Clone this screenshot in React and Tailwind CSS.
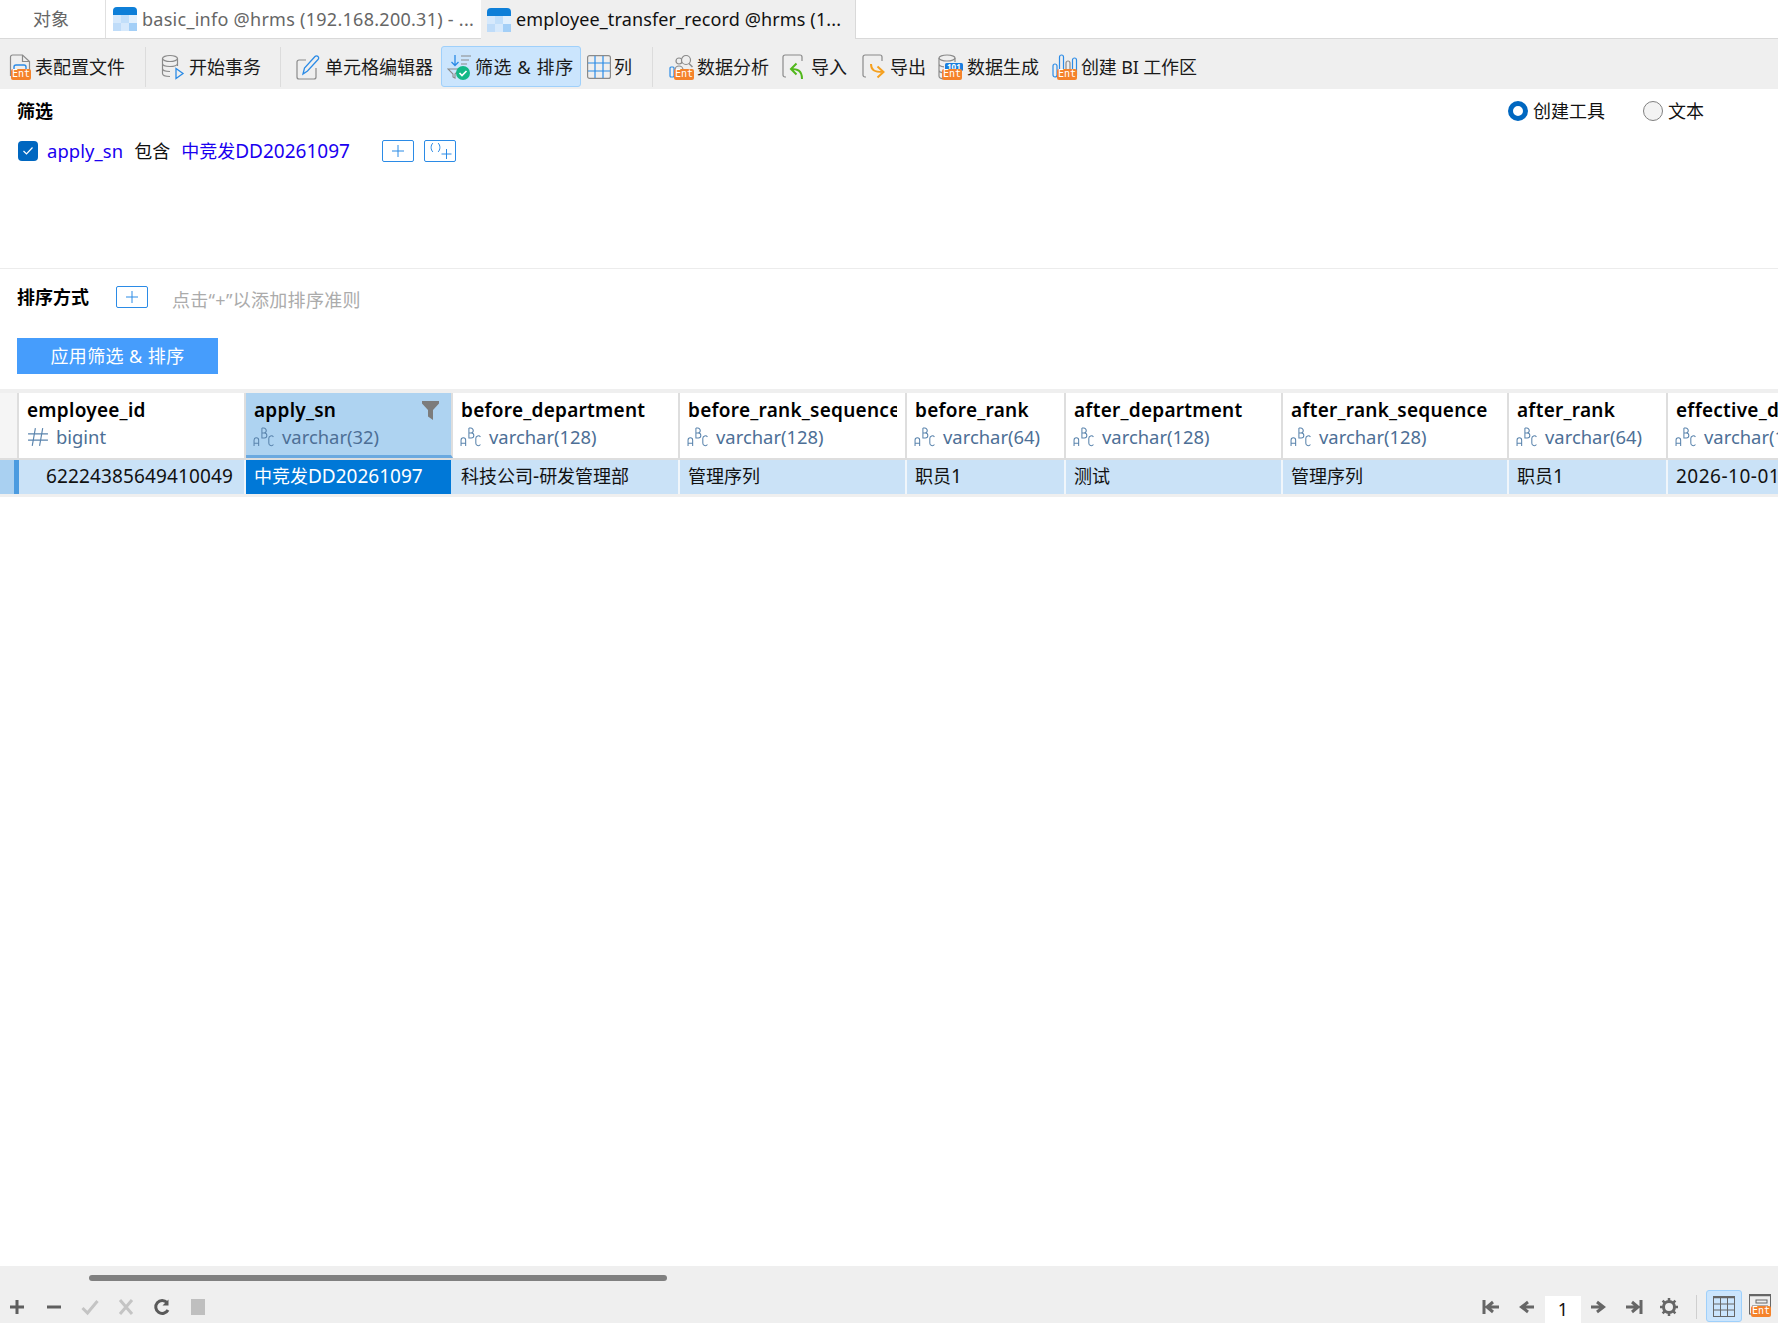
import React from 'react';

const font = { fontFamily: '"Noto Sans", "Noto Sans CJK SC", sans-serif' };

function Ent({ className }) {
  return (
    <span className={"absolute flex items-center justify-center rounded-[2px] bg-[#f5822a] text-white text-[10px] leading-none h-[11px] w-[20px] " + (className || "")} style={{ fontFamily: '"DejaVu Sans Mono", monospace' }}>
      Ent
    </span>
  );
}

function TableTabIcon() {
  return (
    <svg width="24" height="24" viewBox="0 0 24 24" className="shrink-0">
      <rect x="0" y="0" width="24" height="24" rx="4" fill="#d6e9fc" />
      <path d="M0 8V4a4 4 0 0 1 4-4h16a4 4 0 0 1 4 4v4z" fill="#0e7fd8" />
      <rect x="8" y="8" width="8" height="8" fill="#c2dffa" />
      <rect x="16" y="8" width="8" height="8" fill="#e2f0fd" />
      <rect x="0" y="16" width="8" height="8" fill="#bfdcf9" />
      <rect x="16" y="16" width="8" height="8" fill="#a3cff7" />
    </svg>
  );
}

function ProfileIcon() {
  return (
    <span className="relative block h-[26px] w-[24px]">
      <svg width="22" height="26" viewBox="0 0 22 26" fill="none">
        <path d="M1.5 22V3a2 2 0 0 1 2-2h10l7 6.5V22" stroke="#8a8a8a" strokeWidth="1.2" />
        <path d="M13.5 1v6.5h7" stroke="#8a8a8a" strokeWidth="1.2" />
        <rect x="5" y="11" width="12" height="9" rx="2" stroke="#2b8be6" strokeWidth="1.4" />
      </svg>
      <Ent className="left-[2px] top-[15px]" />
    </span>
  );
}

function TxIcon() {
  return (
    <svg width="24" height="26" viewBox="0 0 24 26" fill="none">
      <ellipse cx="9" cy="4.5" rx="7.5" ry="3" stroke="#8a8a8a" strokeWidth="1.2" />
      <path d="M1.5 4.5v15c0 1.700 3.400 3 7.500 3M16.500 4.500V12M1.500 9.500c0 1.700 3.400 3 7.500 3s7.500-1.300 7.500-3M1.500 14.500c0 1.700 3.400 3 7.500 3" stroke="#8a8a8a" strokeWidth="1.2" />
      <path d="M15 14.500v10l7-5z" stroke="#2b8be6" strokeWidth="1.3" />
    </svg>
  );
}

function EditIcon() {
  return (
    <svg width="24" height="26" viewBox="0 0 24 26" fill="none">
      <path d="M10 6H3a2 2 0 0 0-2 2v15a2 2 0 0 0 2 2h15a2 2 0 0 0 2-2V14" stroke="#8a8a8a" strokeWidth="1.2" />
      <path d="M7 20l1.500-6L19 2.500a2 2 0 0 1 3 0 2 2 0 0 1 0 3L11.500 17z" stroke="#2b8be6" strokeWidth="1.3" />
    </svg>
  );
}

function FilterSortIcon() {
  return (
    <svg width="26" height="26" viewBox="0 0 26 26" fill="none">
      <path d="M8 1v10M4.500 8l3.500 3.500L11.500 8" stroke="#2b8be6" strokeWidth="1.3" />
      <path d="M14 2h10M14 6h8M14 10h6" stroke="#8a8a8a" strokeWidth="1.1" />
      <path d="M1 15h12l-5 5v4l-2-1v-3z" stroke="#8a8a8a" strokeWidth="1.1" />
      <circle cx="16" cy="19" r="7" fill="#12b886" />
      <path d="M12.500 19l2.500 2.500 4.500-4.500" stroke="#fff" strokeWidth="1.700" />
    </svg>
  );
}

function ColumnsIcon() {
  return (
    <svg width="24" height="24" viewBox="0 0 24 24" fill="none">
      <rect x="0.600" y="0.600" width="22.800" height="22.800" rx="2" stroke="#8a8a8a" strokeWidth="1.200" />
      <path d="M8 1v22M16 1v22" stroke="#2b8be6" strokeWidth="1.200" />
      <path d="M1 8h22M1 16h22" stroke="#2b8be6" strokeWidth="1.200" />
    </svg>
  );
}

function AnalysisIcon() {
  return (
    <span className="relative block h-[26px] w-[26px]">
      <svg width="26" height="26" viewBox="0 0 26 26" fill="none">
        <rect x="1" y="13" width="4" height="10" rx="1" stroke="#2b8be6" strokeWidth="1.200" />
        <circle cx="10" cy="7" r="3" stroke="#8a8a8a" strokeWidth="1.200" />
        <path d="M6 22v-6a4 4 0 0 1 8 0v6" stroke="#8a8a8a" strokeWidth="1.200" />
        <circle cx="17" cy="6" r="4.500" fill="#efefef" stroke="#8a8a8a" strokeWidth="1.200" />
        <path d="M20 9.500l3.500 3.500" stroke="#8a8a8a" strokeWidth="1.500" />
      </svg>
      <Ent className="left-[5px] top-[15px]" />
    </span>
  );
}

function ImportIcon() {
  return (
    <svg width="24" height="26" viewBox="0 0 24 26" fill="none">
      <path d="M4 23H3a2 2 0 0 1-2-2V3a2 2 0 0 1 2-2h15a2 2 0 0 1 2 2v4" stroke="#8a8a8a" strokeWidth="1.200" />
      <path d="M14.500 9.500L9 15l5.500 5.500M9 15c6 0 11 1 11 10" stroke="#52b81c" strokeWidth="2" />
    </svg>
  );
}

function ExportIcon() {
  return (
    <svg width="24" height="26" viewBox="0 0 24 26" fill="none">
      <path d="M4 23H3a2 2 0 0 1-2-2V3a2 2 0 0 1 2-2h15a2 2 0 0 1 2 2v4" stroke="#8a8a8a" strokeWidth="1.200" />
      <path d="M9 10c0 6 3 8 12 8M15.500 12.500l6 5.500-6 5.500" stroke="#f5a01f" strokeWidth="2" />
    </svg>
  );
}

function GenerateIcon() {
  return (
    <span className="relative block h-[26px] w-[26px]">
      <svg width="26" height="26" viewBox="0 0 26 26" fill="none">
        <ellipse cx="9" cy="4" rx="8" ry="3" stroke="#8a8a8a" strokeWidth="1.200" />
        <path d="M1 4v18c0 1.500 2 2.500 4 2.800M17 4v4M1 10c0 1.500 2 2.500 5 2.800M1 16c0 1.500 2 2.500 4 2.800" stroke="#8a8a8a" strokeWidth="1.200" />
        <rect x="7" y="9" width="18" height="8" rx="1.500" fill="#1a7fe0" />
      </svg>
      <span className="absolute left-[9px] top-[8px] text-[8px] leading-[9px] text-white font-bold">101</span>
      <Ent className="left-[4px] top-[15px]" />
    </span>
  );
}

function BiIcon() {
  return (
    <span className="relative block h-[26px] w-[26px]">
      <svg width="26" height="26" viewBox="0 0 26 26" fill="none">
        <rect x="1" y="10" width="4" height="13" rx="2" stroke="#2b8be6" strokeWidth="1.200" />
        <rect x="7.500" y="1" width="4" height="22" rx="2" stroke="#2b8be6" strokeWidth="1.200" />
        <rect x="14" y="7" width="4" height="16" rx="2" stroke="#8a8a8a" strokeWidth="1.200" />
        <rect x="20.500" y="4" width="4" height="19" rx="2" stroke="#2b8be6" strokeWidth="1.200" />
      </svg>
      <Ent className="left-[5px] top-[15px]" />
    </span>
  );
}

function ToolItem({ icon, label, active, gap, className, labelClass }) {
  return (
    <div className={"flex items-center h-[41px] border " + (active ? "bg-[#cbe5fd] border-[#9fd0fb] rounded-[3px] " : "border-transparent ") + (className || "")}>
      {icon}
      <span className={"text-[18px] leading-none text-[#1a1a1a] whitespace-nowrap " + (labelClass || "")} style={{ marginLeft: gap }}>{label}</span>
    </div>
  );
}

function Sep({ className }) {
  return <div className={"w-px h-[40px] bg-[#dcdcdc] " + (className || "")} />;
}

function AbcIcon() {
  return (
    <svg width="22" height="20" viewBox="0 0 21 19" fill="none" stroke="#5a84ad" strokeWidth="1" className="shrink-0 -ml-[1px]">
      <path d="M1 18l0-5.500a2.200 2.200 0 0 1 4.400 0V18M1 15.500h4.400" />
      <path d="M8.500 1v9.500h2.300a2.300 2.300 0 0 0 0-4.800H8.500M8.500 5.700h1.800a2.300 2.300 0 0 0 0-4.700H8.500" />
      <path d="M19.500 9.500a2.400 2.400 0 0 0-4.400 1.300v4.600a2.400 2.400 0 0 0 4.400 1.300" />
    </svg>
  );
}

function HashIcon() {
  return (
    <svg width="22" height="20" viewBox="0 0 21 19" fill="none" stroke="#5a84ad" strokeWidth="1.100" className="shrink-0">
      <path d="M8 1L5 18M15 1l-3 17M1 6.500h19M1 12.500h19" />
    </svg>
  );
}

const columns = [
  { name: 'employee_id', type: 'bigint', w: 'w-[227px]', value: '62224385649410049', hash: true, right: true, track: 'tracking-[0.13px]' },
  { name: 'apply_sn', type: 'varchar(32)', w: 'w-[207px]', value: '中竞发DD20261097', selected: true },
  { name: 'before_department', type: 'varchar(128)', w: 'w-[227px]', value: '科技公司-研发管理部' },
  { name: 'before_rank_sequence', type: 'varchar(128)', w: 'w-[227px]', value: '管理序列' },
  { name: 'before_rank', type: 'varchar(64)', w: 'w-[159px]', value: '职员1' },
  { name: 'after_department', type: 'varchar(128)', w: 'w-[217px]', value: '测试' },
  { name: 'after_rank_sequence', type: 'varchar(128)', w: 'w-[226px]', value: '管理序列' },
  { name: 'after_rank', type: 'varchar(64)', w: 'w-[159px]', value: '职员1' },
  { name: 'effective_date', type: 'varchar(128)', w: 'w-[227px]', value: '2026-10-01', track: 'tracking-[0.5px]' },
];

// digits and latin run a touch wider than the cjk in the reference
function Mixed({ text }) {
  const parts = text.split(/([\u4e00-\u9fff]+)/).filter(Boolean);
  return parts.map((p, i) => (
    <span key={i} className={/[\u4e00-\u9fff]/.test(p) ? "text-[18px]" : "text-[19px]"}>{p}</span>
  ));
}

function HeaderCell({ col }) {
  return (
    <div className={col.w + " shrink-0 h-[65px] relative border-r-[2px] border-[#dedede] pl-[8px] pr-[8px] overflow-hidden " + (col.selected ? "bg-[#aed3f1] border-b-[3px] border-b-[#6aa9e0]" : "bg-white")}>
      <div className="text-[19px] tracking-[0.25px] leading-[24px] mt-[5px] font-semibold text-black whitespace-nowrap overflow-hidden">{col.name}</div>
      <div className="flex items-center h-[24px] mt-[3px] text-[18.4px] text-[#4d6f96] whitespace-nowrap">
        {col.hash ? <HashIcon /> : <AbcIcon />}
        <span className="ml-[7px]">{col.type}</span>
      </div>
      {col.selected && (
        <svg width="17" height="19" viewBox="0 0 17 19" className="absolute right-[12px] top-[8px]">
          <path d="M0 0h17v2.500L11 9v10l-5-3.500V9L0 2.500z" fill="#7c7c7c" />
        </svg>
      )}
    </div>
  );
}

function DataCell({ col }) {
  return (
    <div className={col.w + " shrink-0 h-[34px] flex items-center border-r-[2px] px-[8px] pb-[2px] whitespace-nowrap overflow-hidden " + (col.selected ? "bg-[#0078d7] text-white border-[#cae2f7]" : "bg-[#cae2f7] text-[#111] border-[#f0f6fb]") + (col.right ? " justify-end pr-[11px]" : "") + (col.track ? " " + col.track : "")}>
      <Mixed text={col.value} />
    </div>
  );
}

function BarIcon({ children, className }) {
  return (
    <svg width="18" height="18" viewBox="0 0 18 18" fill="none" className={"shrink-0 " + (className || "")}>
      {children}
    </svg>
  );
}

export default function App() {
  return (
    <div className="w-[1778px] h-[1323px] flex flex-col overflow-hidden bg-white" style={font}>
      {/* tabs */}
      <div className="h-[39px] shrink-0 flex border-b border-[#d9d9d9] text-[18px]">
        <div className="w-[105px] flex items-center justify-center text-[#666] pr-[3px]">对象</div>
        <div className="w-[376px] flex items-center pl-[7px] gap-[5px] border-l border-[#e0e0e0] text-[#666] whitespace-nowrap">
          <TableTabIcon />
          <span className="tracking-[0.27px]">basic_info @hrms (192.168.200.31) - ...</span>
        </div>
        <div className="w-[375px] flex items-center pl-[6px] gap-[5px] bg-[#efefef] border-r border-[#d9d9d9] text-[#111] whitespace-nowrap h-[39px]">
          <TableTabIcon />
          <span className="tracking-[0.13px]">employee_transfer_record @hrms (1...</span>
        </div>
      </div>

      {/* toolbar */}
      <div className="h-[50px] shrink-0 bg-[#efefef] flex items-center pt-[5px]">
        <ToolItem icon={<ProfileIcon />} label="表配置文件" gap="2px" className="ml-[8px]" />
        <Sep className="ml-[19px]" />
        <ToolItem icon={<TxIcon />} label="开始事务" gap="4px" className="ml-[14px]" />
        <Sep className="ml-[18px]" />
        <ToolItem icon={<EditIcon />} label="单元格编辑器" gap="5px" className="ml-[14px]" />
        <ToolItem icon={<FilterSortIcon />} label="筛选 & 排序" gap="2px" active labelClass="tracking-[0.6px]" className="ml-[7px] w-[140px] pl-[5px]" />
        <ToolItem icon={<ColumnsIcon />} label="列" gap="3px" className="ml-[5px]" />
        <Sep className="ml-[19px]" />
        <ToolItem icon={<AnalysisIcon />} label="数据分析" gap="2px" className="ml-[15px]" />
        <ToolItem icon={<ImportIcon />} label="导入" gap="5px" className="ml-[11px]" />
        <ToolItem icon={<ExportIcon />} label="导出" gap="4px" className="ml-[13px]" />
        <ToolItem icon={<GenerateIcon />} label="数据生成" gap="3px" className="ml-[10px]" />
        <ToolItem icon={<BiIcon />} label="创建 BI 工作区" gap="3px" labelClass="tracking-[-0.15px]" className="ml-[11px]" />
      </div>

      {/* filter */}
      <div className="h-[180px] shrink-0 border-b border-[#ececec] relative pl-[17px]">
        <div className="flex justify-between items-center h-[44px]">
          <span className="text-[18px] font-bold text-black">筛选</span>
          <div className="flex items-center text-[18px] text-[#111] mr-[74px]">
            <span className="w-[20px] h-[20px] rounded-full border-[5px] border-[#0067c0] bg-white" />
            <span className="ml-[5px]">创建工具</span>
            <span className="ml-[38px] w-[20px] h-[20px] rounded-full border border-[#808080] bg-[#f3f3f3]" />
            <span className="ml-[5px]">文本</span>
          </div>
        </div>
        <div className="flex items-center h-[26px] mt-[5px] text-[18px]">
          <span className="ml-[1px] w-[20px] h-[20px] rounded-[4px] bg-[#0067c0] flex items-center justify-center">
            <svg width="12" height="10" viewBox="0 0 12 10" fill="none"><path d="M1.500 5l3 3 6-6.500" stroke="#fff" strokeWidth="1.200" /></svg>
          </span>
          <span className="ml-[9px] text-[#1a00f0] tracking-[0.1px] text-[18.4px]">apply_sn</span>
          <span className="ml-[11px] text-[#111]">包含</span>
          <span className="ml-[11px] text-[#1a00f0]"><Mixed text="中竞发DD20261097" /></span>
          <button className="ml-[32px] w-[32px] h-[22px] border border-[#2b8be6] rounded-[2px] flex items-center justify-center">
            <svg width="12" height="12" viewBox="0 0 12 12" fill="none"><path d="M6 0v12M0 6h12" stroke="#2b8be6" strokeWidth="1" /></svg>
          </button>
          <button className="ml-[10px] w-[32px] h-[22px] border border-[#2b8be6] rounded-[2px] flex items-center justify-center">
            <svg width="26" height="18" viewBox="0 0 26 18" fill="none">
              <path d="M6 1c-2.500 2-2.500 7 0 9M11 1c2.500 2 2.500 7 0 9" stroke="#2b8be6" strokeWidth="1" />
              <path d="M19.500 7v10M14.500 12h10" stroke="#2b8be6" strokeWidth="1" />
            </svg>
          </button>
        </div>
      </div>

      {/* sort */}
      <div className="h-[120px] shrink-0 pl-[17px]">
        <div className="flex items-center h-[26px] mt-[15px]">
          <span className="text-[18px] font-bold text-black">排序方式</span>
          <button className="ml-[27px] w-[32px] h-[22px] border border-[#2b8be6] rounded-[2px] flex items-center justify-center">
            <svg width="12" height="12" viewBox="0 0 12 12" fill="none"><path d="M6 0v12M0 6h12" stroke="#2b8be6" strokeWidth="1" /></svg>
          </button>
          <span className="ml-[24px] mt-[6px] text-[18px] text-[#ababab] tracking-[0.3px]">点击“+”以添加排序准则</span>
        </div>
        <button className="mt-[28px] w-[201px] h-[36px] bg-[#469dfc] text-white text-[18px] tracking-[0.4px] flex items-center justify-center">应用筛选 & 排序</button>
      </div>

      {/* grid */}
      <div className="flex-1 min-h-0 flex flex-col overflow-hidden">
        <div className="h-[4px] shrink-0 bg-[#efefef]" />
        <div className="flex shrink-0 border-b-[2px] border-[#dedede]">
          <div className="w-[19px] shrink-0 h-[65px] bg-[#f5f5f5] border-r-[2px] border-[#dedede]" />
          {columns.map((c) => <HeaderCell key={c.name} col={c} />)}
        </div>
        <div className="flex shrink-0">
          <div className="w-[19px] shrink-0 h-[34px] bg-[#a9d0f1] border-r-[5px] border-[#4b9be0]" />
          {columns.map((c) => <DataCell key={c.name} col={c} />)}
        </div>
        <div className="h-[3px] shrink-0 bg-[#efefef]" />
      </div>

      {/* bottom bar */}
      <div className="h-[57px] shrink-0 bg-[#efefef] flex flex-col">
        <div className="h-[6px] mt-[9px] ml-[89px] w-[578px] rounded-full bg-[#808080] shrink-0" />
        <div className="flex-1 flex items-center pl-[8px] pr-[6px] pt-[9px]">
          <BarIcon><path d="M9 2v14M2 9h14" stroke="#5f5f5f" strokeWidth="3" /></BarIcon>
          <BarIcon className="ml-[19px]"><path d="M2 9h14" stroke="#5f5f5f" strokeWidth="3" /></BarIcon>
          <BarIcon className="ml-[18px]"><path d="M1.500 10l5 5L16.500 3" stroke="#c4c4c4" strokeWidth="3" /></BarIcon>
          <BarIcon className="ml-[18px]"><path d="M3 2l12 14M15 2L3 16" stroke="#c4c4c4" strokeWidth="3" /></BarIcon>
          <BarIcon className="ml-[18px]">
            <path d="M14 4.500A6.500 6.500 0 1 0 15 12" stroke="#5a5a5a" strokeWidth="3" />
            <path d="M15.500 1.500v6h-6z" fill="#5a5a5a" />
          </BarIcon>
          <div className="ml-[20px] w-[14px] h-[16px] bg-[#bfbfbf]" />
          <div className="flex-1" />
          <BarIcon><path d="M2 2v14M6 9h11M11 4L5 9l6 5" stroke="#666" strokeWidth="3" /></BarIcon>
          <BarIcon className="ml-[18px]"><path d="M16 9H5M10 4L3.500 9l6.500 5" stroke="#666" strokeWidth="3" /></BarIcon>
          <div className="ml-[9px] w-[36px] h-[27px] self-end bg-white flex items-center justify-center text-[18px] text-[#111]">1</div>
          <BarIcon className="ml-[8px]"><path d="M2 9h11M8 4l6.500 5L8 14" stroke="#666" strokeWidth="3" /></BarIcon>
          <BarIcon className="ml-[18px]"><path d="M1 9h11M7 4l6 5-6 5M16 2v14" stroke="#666" strokeWidth="3" /></BarIcon>
          <BarIcon className="ml-[17px]">
            <circle cx="9" cy="9" r="5.500" stroke="#666" strokeWidth="3" />
            <path d="M9 0v3.500M9 14.500V18M0 9h3.500M14.500 9H18M2.600 2.600l2.500 2.500M12.900 12.900l2.500 2.500M15.400 2.600l-2.500 2.500M5.100 12.900l-2.500 2.500" stroke="#666" strokeWidth="2.500" />
          </BarIcon>
          <div className="ml-[18px] w-px h-[24px] bg-[#cfcfcf]" />
          <div className="ml-[9px] w-[36px] h-[32px] self-end mb-[1px] rounded-[3px] bg-[#cbe5fd] border border-[#9fd0fb] flex items-center justify-center">
            <svg width="22" height="21" viewBox="0 0 22 21" fill="none">
              <rect x="0.500" y="1" width="21" height="19.500" stroke="#666" strokeWidth="1" />
              <path d="M0 1h22" stroke="#666" strokeWidth="2.500" />
              <path d="M7.500 1v20M14.500 1v20M0 8h22M0 14h22" stroke="#666" strokeWidth="1" />
            </svg>
          </div>
          <div className="ml-[7px] relative w-[22px] h-[26px] mr-[1px]">
            <svg width="22" height="21" viewBox="0 0 22 21" fill="none">
              <rect x="0.500" y="1" width="21" height="19" stroke="#666" strokeWidth="1" />
              <path d="M0 1h22" stroke="#666" strokeWidth="2.500" />
              <rect x="7" y="6" width="11" height="3" stroke="#666" strokeWidth="1" />
              <path d="M3 12h16" stroke="#666" strokeWidth="1" />
            </svg>
            <Ent className="left-[2px] top-[12px]" />
          </div>
        </div>
      </div>
    </div>
  );
}
